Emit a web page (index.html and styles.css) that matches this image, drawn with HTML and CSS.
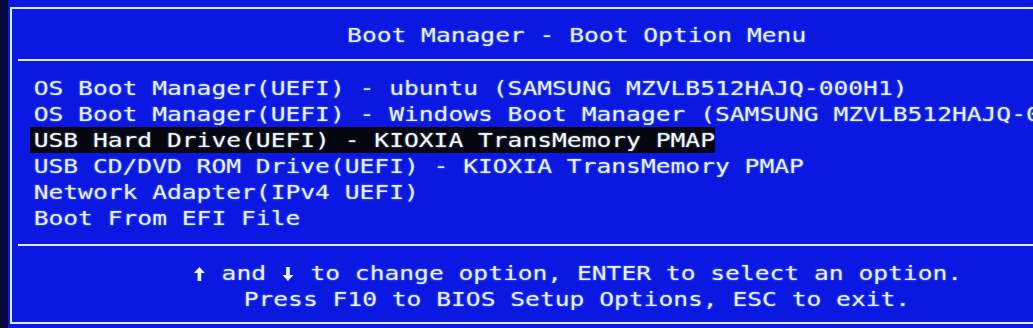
FILE: index.html
```html
<!DOCTYPE html>
<html lang="en">
<head>
  <meta charset="UTF-8">
  <meta name="viewport" content="width=device-width, initial-scale=1.0">
  <title>Boot Manager</title>
  <link rel="stylesheet" href="styles.css">
</head>
<body>
  <div class="screen">
    <div class="frame">
      <div class="title"><span class="wide">Boot Manager - Boot Option Menu</span></div>
      <div class="rule"></div>

      <div class="menu">
        <div class="item"><span class="wide">OS Boot Manager(UEFI) - ubuntu (SAMSUNG MZVLB512HAJQ-000H1)</span></div>
        <div class="item"><span class="wide">OS Boot Manager(UEFI) - Windows Boot Manager (SAMSUNG MZVLB512HAJQ-000H1)</span></div>
        <div class="item selected"><span class="wide">USB Hard Drive(UEFI) - KIOXIA TransMemory PMAP</span></div>
        <div class="item"><span class="wide">USB CD/DVD ROM Drive(UEFI) - KIOXIA TransMemory PMAP</span></div>
        <div class="item"><span class="wide">Network Adapter(IPv4 UEFI)</span></div>
        <div class="item"><span class="wide">Boot From EFI File</span></div>
      </div>

      <div class="rule"></div>
      <div class="help">
        <div><span class="wide"><svg class="arrow" viewBox="0 0 12 16" width="12" height="16"><polygon points="6,1 10.5,7 7.5,7 7.5,15 4.5,15 4.5,7 1.5,7"/></svg> and <svg class="arrow" viewBox="0 0 12 16" width="12" height="16"><polygon points="6,15 10.5,9 7.5,9 7.5,1 4.5,1 4.5,9 1.5,9"/></svg> to change option, ENTER to select an option.</span></div>
        <div><span class="wide">Press F10 to BIOS Setup Options, ESC to exit.</span></div>
      </div>
    </div>
  </div>
</body>
</html>
```

FILE: styles.css
```css
* { box-sizing: border-box; }
body {
  margin: 0;
  padding: 0;
  background: #06093a;
  overflow: hidden;
  height: 328px;
  font-family: 'DejaVu Sans Mono', 'Liberation Mono', monospace;
  font-size: 20px;
  color: #e4f2ff;
  text-shadow: 0 0 2px rgba(190, 225, 255, 0.55);
}
.screen {
  margin-left: 8px;
  height: 328px;
  padding-top: 7px;
  background: #0a18e2;
  width: 1200px;
}
.frame {
  margin-left: 2px;
  width: 1134px;
  border: 2px solid #d6ebff;
  padding-bottom: 10px;
}
/* the BIOS font is wider than any mono we have */
.wide {
  display: inline-block;
  white-space: nowrap;
  transform: scaleX(1.23);
}
.title {
  height: 50px;
  line-height: 52px;
  text-align: center;
}
.rule {
  height: 2px;
  margin: 0 6px;
  background: #d6ebff;
}
.menu {
  padding: 14px 0 13px 18px;
}
.item {
  height: 26px;
  line-height: 26px;
  white-space: nowrap;
}
.item .wide {
  padding-left: 3px;
  transform-origin: left center;
}
.item.selected .wide {
  background: #05060f;
  color: #f4f8ff;
}
.help {
  padding-top: 14px;
  text-align: center;
  line-height: 26px;
}
.arrow {
  fill: #e4f2ff;
  vertical-align: -2px;
}
```
